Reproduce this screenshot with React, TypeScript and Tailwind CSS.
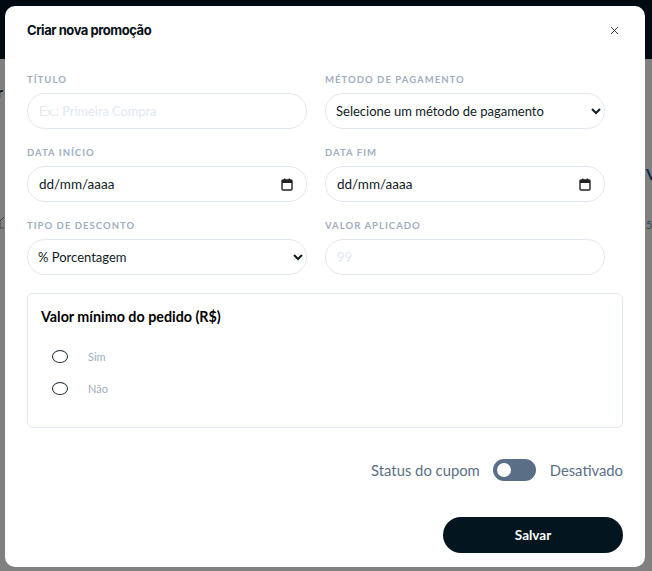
import { useState } from 'react';
import { X } from 'lucide-react';

const font = "font-['Lato','Noto_Sans',sans-serif]";

function Label({ children }: { children: string }) {
  return (
    <label className="block text-[9.5px] leading-[14px] font-bold tracking-[0.11em] uppercase text-[#a0aec0] mb-[6px]">
      {children}
    </label>
  );
}

function DateField({ label }: { label: string }) {
  return (
    <div>
      <Label>{label}</Label>
      <div className="h-[36px] rounded-[18px] border border-[#e2e8f0] pl-[11px] pr-[13px] flex items-center justify-between text-[13.5px] text-[#0f1c24]">
        <span>dd/mm/aaaa</span>
        <svg width="12" height="13" viewBox="0 0 12 13" fill="none">
          <rect x="1" y="2" width="10" height="10" rx="1" stroke="#222" strokeWidth="1.4" />
          <rect x="1" y="2" width="10" height="3" fill="#222" />
          <rect x="3" y="0.5" width="1.4" height="2" fill="#222" />
          <rect x="7.6" y="0.5" width="1.4" height="2" fill="#222" />
        </svg>
      </div>
    </div>
  );
}

function Radio({ label }: { label: string }) {
  return (
    <label className="flex items-center h-[13px]">
      <span className="ml-[11px] w-[16px] h-[13px] rounded-[50%] border-[1.5px] border-[#1a2a33]" />
      <span className="ml-[20px] mt-[2px] text-[11px] text-[#a0aec0]">{label}</span>
    </label>
  );
}

export default function App() {
  const [title, setTitle] = useState('');
  const [value, setValue] = useState('');

  return (
    <div className={`relative h-[571px] w-[652px] overflow-hidden bg-[#808080] ${font}`}>
      {/* Page behind the overlay */}
      <div className="absolute inset-x-0 top-0 h-[59px] bg-[#020a11]" />
      <span className="absolute left-[-3px] top-[80px] text-[16px] font-bold text-[#111]">r</span>
      <span className="absolute left-[646px] top-[162px] text-[16px] font-bold text-[#0b2a4a]">V</span>
      <span className="absolute left-[646px] top-[217px] text-[11px] text-[#3c4a58]">5</span>
      <svg className="absolute left-0 top-[215px]" width="5" height="14" viewBox="0 0 5 14" fill="none">
        <path d="M0 6 L4 2 M0 6 V13 H4" stroke="#444" strokeWidth="1" />
      </svg>

      {/* Modal */}
      <div className="absolute left-[5px] top-[6px] w-[640px] h-[561px] rounded-[10px] bg-white px-[22px]">
        <div className="h-[34px] flex items-end justify-between">
          <h2 className="text-[13px] leading-[20px] font-bold text-[#050f16] font-['Inter',sans-serif] tracking-[-0.035em]">
            Criar nova promoção
          </h2>
          <button className="mb-[3px] mr-[2px] text-[#1a2a33]">
            <X size={13} strokeWidth={1.6} />
          </button>
        </div>

        <div className="mt-[33px] grid grid-cols-[280px_280px] gap-x-[18px] gap-y-[17px]">
          <div>
            <Label>Título</Label>
            <input
              value={title}
              onChange={(e) => setTitle(e.target.value)}
              placeholder="Ex.: Primeira Compra"
              className="w-full h-[36px] rounded-[18px] border border-[#e2e8f0] px-[11px] text-[12.8px] outline-none placeholder:text-[#e2e8f0]"
            />
          </div>
          <div>
            <Label>Método de pagamento</Label>
            <select className="w-full h-[36px] rounded-[18px] border border-[#e2e8f0] bg-white pl-[6px] pr-[1px] text-[13px] text-[#0f1c24] outline-none">
              <option>Selecione um método de pagamento</option>
            </select>
          </div>
          <DateField label="Data início" />
          <DateField label="Data fim" />
          <div>
            <Label>Tipo de desconto</Label>
            <select className="w-full h-[36px] rounded-[18px] border border-[#e2e8f0] bg-white pl-[6px] pr-[1px] text-[13px] text-[#0f1c24] outline-none">
              <option>% Porcentagem</option>
            </select>
          </div>
          <div>
            <Label>Valor aplicado</Label>
            <input
              value={value}
              onChange={(e) => setValue(e.target.value)}
              placeholder="99"
              className="w-full h-[36px] rounded-[18px] border border-[#e2e8f0] px-[11px] text-[13px] outline-none placeholder:text-[#e2e8f0]"
            />
          </div>
        </div>

        <div className="mt-[18px] h-[135px] rounded-[6px] border border-[#e2e8f0] px-[13px] pt-[13px]">
          <h3 className="text-[14.3px] leading-[20px] font-bold text-black">Valor mínimo do pedido (R$)</h3>
          <div className="mt-[23px] flex flex-col gap-[19px]">
            <Radio label="Sim" />
            <Radio label="Não" />
          </div>
        </div>

        <div className="mt-[31px] flex items-center justify-end text-[14.8px] text-[#5a6f85]">
          <span>Status do cupom</span>
          <span className="ml-[13px] w-[43px] h-[22px] rounded-full bg-[#5a6f85] flex items-center pl-[4px]">
            <span className="w-[14px] h-[14px] rounded-full bg-white" />
          </span>
          <span className="ml-[14px]">Desativado</span>
        </div>

        <div className="mt-[36px] flex justify-end">
          <button className="w-[180px] h-[36px] rounded-[18px] bg-[#03161f] text-white text-[13.5px] font-bold">
            Salvar
          </button>
        </div>
      </div>
    </div>
  );
}
